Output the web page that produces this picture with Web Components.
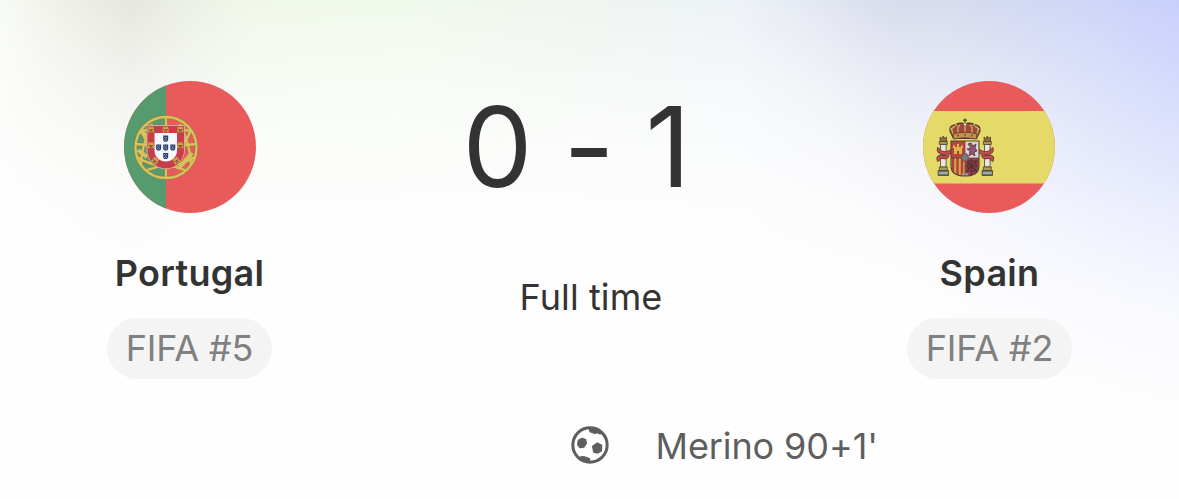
<!DOCTYPE html>
<html lang="en">
<head>
<meta charset="utf-8">
<title>Portugal - Spain</title>
<style>
    body {
        margin: 0;
        background: #fefefe;
        font-family: Inter, "Liberation Sans", sans-serif;
        color: #333;
    }
</style>
</head>
<body>
<match-card>
    <team-badge slot="home" rank="FIFA #5"><flag-portugal slot="flag"></flag-portugal>Portugal</team-badge>
    <match-score slot="score" home="0" away="1">Full time</match-score>
    <team-badge slot="away" rank="FIFA #2"><flag-spain slot="flag"></flag-spain>Spain</team-badge>
    <goal-row slot="goals">Merino 90+1'</goal-row>
</match-card>

<script>
function define(name, html, setup) {
    const template = document.createElement("template");
    template.innerHTML = html;

    customElements.define(name, class extends HTMLElement {
        constructor() {
            super();
            const shadow = this.attachShadow({mode: "open"});
            shadow.append(template.content.cloneNode(true));
        }

        connectedCallback() {
            if (setup) setup(this, this.shadowRoot);
        }
    });
}

define("match-card", `
    <style>
        :host {
            display: flex;
            flex-direction: column;
            box-sizing: border-box;
            height: 499px;
            padding-top: 81px;
            overflow: hidden;
            background:
                radial-gradient(ellipse 420px 370px at 1240px 60px, rgba(196, 204, 252, 0.6), rgba(206, 213, 252, 0.42) 35%, rgba(224, 229, 253, 0.2) 68%, rgba(255, 255, 255, 0) 100%),
                linear-gradient(to bottom, rgba(254, 254, 254, 0), rgba(254, 254, 254, 0.25) 40px, rgba(254, 254, 254, 0.52) 85px, rgba(254, 254, 254, 0.75) 140px, rgba(254, 254, 254, 0.92) 210px, #fefefe 300px),
                linear-gradient(to right, #f8fbf5, #eff1e9 60px, #e6e7df 130px, #ebefe5 180px, #f0f8ea 250px, #f1f9ec 400px, #eff5ef 580px, #edf2f7 740px, #e3e7f1 820px, #d6daea 900px, #d3d8eb 970px, #d0d7f2 1070px, #c8cefa 1179px);
        }

        .teams {
            display: grid;
            grid-template-columns: 379px 1fr 379px;
            align-items: start;
        }

        .goals {
            margin-top: 45px;
        }
    </style>
    <div class="teams">
        <slot name="home"></slot>
        <slot name="score"></slot>
        <slot name="away"></slot>
    </div>
    <div class="goals"><slot name="goals"></slot></div>
`);

define("team-badge", `
    <style>
        :host {
            display: flex;
            flex-direction: column;
            align-items: center;
        }

        .name {
            margin-top: 38px;
            font-size: 36px;
            line-height: 44px;
            font-weight: 600;
            letter-spacing: 0.3px;
        }

        .rank {
            box-sizing: border-box;
            width: 165px;
            height: 61px;
            margin-top: 23px;
            border-radius: 31px;
            background: #f4f4f4;
            color: #808080;
            font-size: 36px;
            line-height: 61px;
            letter-spacing: -0.15px;
            text-align: center;
            white-space: nowrap;
        }
    </style>
    <slot name="flag"></slot>
    <div class="name"><slot></slot></div>
    <div class="rank"></div>
`, (el, shadow) => {
    shadow.querySelector(".rank").textContent = el.getAttribute("rank");
});

define("match-score", `
    <style>
        :host {
            display: flex;
            flex-direction: column;
            align-items: center;
        }

        .score {
            display: flex;
            gap: 31px;
            padding-right: 26px;
            font-size: 111px;
            line-height: 132px;
        }

        .status {
            margin-top: 62px;
            padding-left: 3px;
            font-size: 36px;
            line-height: 44px;
            letter-spacing: 0.1px;
        }
    </style>
    <div class="score"><span class="home"></span><span>-</span><span class="away"></span></div>
    <div class="status"><slot></slot></div>
`, (el, shadow) => {
    shadow.querySelector(".home").textContent = el.getAttribute("home");
    shadow.querySelector(".away").textContent = el.getAttribute("away");
});

define("goal-row", `
    <style>
        :host {
            display: grid;
            grid-template-columns: 1fr 38px 1fr;
            column-gap: 47px;
            align-items: center;
            color: #5e5e5e;
            font-size: 36px;
            line-height: 44px;
            letter-spacing: -0.1px;
        }

        svg {
            display: block;
            grid-column: 2;
            margin-bottom: 2px;
        }
    </style>
    <svg width="38" height="38" viewBox="18 17 114 114">
        <circle cx="75" cy="74" r="51.5" fill="none" stroke="currentColor" stroke-width="9"/>
        <g fill="currentColor" stroke="currentColor" stroke-width="4" stroke-linejoin="round">
            <path d="M51 54 62 58 64 69 57 80 45 82 38 73 40 60Z"/>
            <path d="M97 68 110 75 109 92 98 98 86 95 83 78Z"/>
            <path d="M72 23 75 34 89 39 98 37 105 41 113 37 98 25Z"/>
            <path d="M42 113 50 109 60 110 73 115 75 125 60 124Z"/>
        </g>
    </svg>
    <span><slot></slot></span>
`);

define("flag-portugal", `
    <style>
        :host {
            display: block;
            width: 132px;
            height: 132px;
            border-radius: 50%;
            overflow: hidden;
        }

        svg { display: block; }
    </style>
    <svg width="132" height="132" viewBox="0 0 132 132">
        <defs>
            <g id="castle">
                <path d="M-3 3V-1H-2.5V-3H-1.2V-2H-.6V-3H.6V-2H1.2V-3H2.5V-1H3V3Z" fill="#d0a84c"/>
                <path d="M-2.4 .2H2.4M-1 3V1.4H1V3" stroke="#7c4a30" stroke-width=".9" fill="none"/>
            </g>
            <g id="quina">
                <path d="M-2.5 -3.1H2.5V.2Q2.5 3.1 0 3.1Q-2.5 3.1 -2.5 .2Z" fill="#263d6b"/>
                <g fill="#cdd5e2"><circle cx="-1" cy="-1.4" r=".5"/><circle cx="1" cy="-1.4" r=".5"/><circle r=".5"/><circle cx="-.8" cy="1.3" r=".5"/><circle cx=".8" cy="1.3" r=".5"/></g>
            </g>
        </defs>
        <rect width="132" height="132" fill="#e95b5a"/>
        <rect width="42" height="132" fill="#569b6e"/>
        <g fill="none">
            <g stroke="#8c7c40" stroke-width="3.3">
                <circle cx="42" cy="66.5" r="30.5"/>
                <path d="M42 36V97M12 63Q42 67 72 63M13 76Q42 94 71 76M17 50Q42 45 67 50M18 51Q30 82 61 89M66 51Q54 82 23 89M17 84Q17 66 28 43M67 84Q67 66 56 43"/>
            </g>
            <g stroke="#d8c25a" stroke-width="2.3">
                <circle cx="42" cy="66.5" r="30.5"/>
                <path d="M42 36V97M12 63Q42 67 72 63M13 76Q42 94 71 76M17 50Q42 45 67 50M18 51Q30 82 61 89M66 51Q54 82 23 89M17 84Q17 66 28 43M67 84Q67 66 56 43"/>
            </g>
            <path d="M17 50 25 58M68 72 55 87M14 69 23 76" stroke="#d8c25a" stroke-width="4"/>
        </g>
        <path d="M23 44.5H60.5V69A18.75 18.8 0 0 1 23 69Z" fill="#c83d4a" stroke="#d9a5a0" stroke-width="1"/>
        <path d="M30.5 52H53V69.5A11.25 11 0 0 1 30.5 69.5Z" fill="#f8f8fa"/>
        <use href="#castle" x="27" y="48.5"/><use href="#castle" x="41.7" y="48.5"/><use href="#castle" x="56.3" y="48.5"/>
        <use href="#castle" x="27" y="64.3"/><use href="#castle" x="56.3" y="64.3"/>
        <use href="#castle" transform="translate(31.2 79.5) rotate(35)"/><use href="#castle" transform="translate(52.3 79.5) rotate(-35)"/>
        <use href="#quina" x="41.7" y="57.7"/><use href="#quina" x="34.6" y="66.5"/><use href="#quina" x="41.7" y="66.5"/>
        <use href="#quina" x="48.8" y="66.5"/><use href="#quina" x="41.7" y="75"/>
    </svg>
`);

define("flag-spain", `
    <style>
        :host {
            display: block;
            width: 132px;
            height: 132px;
            margin-right: 1px;
            border-radius: 50%;
            overflow: hidden;
        }

        svg { display: block; }
    </style>
    <svg width="132" height="132" viewBox="0 0 132 132">
        <defs>
            <clipPath id="shield"><path d="M28 60H56V85Q56 95 42 95Q28 95 28 85Z"/></clipPath>
            <g id="pillar" stroke="#4a4038" stroke-width=".8">
                <path d="M-3.2 -15.5V-20L-1.5 -18.5 0 -21 1.5 -18.5 3.2 -20V-15.5Z" fill="#8f6f38"/>
                <path d="M-4 -15.5H4V-12.5H-4Z" fill="#b39648"/>
                <path d="M-2.8 -12.5H2.8V10H-2.8Z" fill="#e9e6e0"/>
                <path d="M-4 10H4V13.5H-4Z" fill="#b39c50"/>
                <path d="M-5.2 13.5H5.2V18.5H-5.2Z" fill="#65776f"/>
                <path d="M-4.5 16H4.5" stroke="#d8dcd8" stroke-width="1.2"/>
            </g>
            <path id="ribbon" d="M-4 -5Q-6 -1 0 0Q6 1 11 -4M-4 8Q-7 3 0 4Q5 5 4 0" fill="none"/>
        </defs>
        <rect width="132" height="132" fill="#e95b5a"/>
        <rect y="30" width="132" height="72.5" fill="#e5da67"/>

        <use href="#pillar" x="20.3" y="76"/>
        <use href="#pillar" x="64.3" y="76"/>
        <g stroke="#6e3430" stroke-width="4"><use href="#ribbon" x="20.3" y="72"/><use href="#ribbon" transform="translate(64.3 72) scale(-1 1)"/></g>
        <g stroke="#b9504c" stroke-width="2.5"><use href="#ribbon" x="20.3" y="72"/><use href="#ribbon" transform="translate(64.3 72) scale(-1 1)"/></g>

        <!-- quartered arms -->
        <g clip-path="url(#shield)">
            <rect x="28" y="60" width="14" height="17" fill="#b9443f"/>
            <rect x="42" y="60" width="14" height="17" fill="#ddd5d8"/>
            <rect x="28" y="77" width="14" height="19" fill="#d5a64a"/>
            <path d="M30 77V96M34.5 77V96M39 77V96" stroke="#b0403a" stroke-width="2.4"/>
            <rect x="42" y="77" width="14" height="19" fill="#95404a"/>
            <path d="M31 73V67H30V64.5H32V66H34V63H36V66H38V64.5H40V67H39V73Z" fill="#e0b34b"/>
            <path d="M34 73V70H36V73" fill="#8e4936"/>
            <path d="M45 63 48 62 50 65 53 63 52 67 54 70 51 71 52 75 49 73 46 75 47 70 44 68 48 67Z" fill="#8f5570" stroke="#5b3b48" stroke-width=".9"/>
            <path d="M43 79 54 91M54 79 43 91M48.5 78V94M43 85H55M45 80H53V90H45Z" stroke="#5a2f36" fill="none" stroke-width="1.2"/>
            <path d="M37 96Q42 87 47 96Z" fill="#b6a3a5"/>
            <path d="M42 60V95M28 77H56" stroke="#593f3a" stroke-width=".7"/>
        </g>
        <path d="M28 60H56V85Q56 95 42 95Q28 95 28 85Z" fill="none" stroke="#5a4038" stroke-width="1.1"/>
        <ellipse cx="42" cy="76.5" rx="3.4" ry="4" fill="#6f7f80" stroke="#8a4644" stroke-width="1"/>

        <!-- crown -->
        <path d="M30.5 57.5 27 50Q26 44 33 43.5Q37 41 42 43Q47 41 51 43.5Q58 44 57 50L53.5 57.5Z" fill="#a04840" stroke="#4f3b2c" stroke-width="1.2"/>
        <path d="M31 54Q26 47 32 45.5M36 54Q33 46 37 44M42 54V43M48 54Q51 46 47 44M53 54Q58 47 52 45.5" fill="none" stroke="#cfa64a" stroke-width="1.5"/>
        <path d="M30 53Q42 49.5 54 53L53.5 58Q42 55.5 30.5 58Z" fill="#c0954a" stroke="#5c4430" stroke-width=".9"/>
        <path d="M34 54.6H36M41 53.8H43M48 54.6H50" stroke="#a13f48" stroke-width="1.6"/>
        <path d="M42 37.5V43M40 39.3H44" stroke="#5b5140" stroke-width="1.4"/>
        <g fill="#f0e3b8" stroke="#7c6440" stroke-width=".4"><circle cx="28.5" cy="48" r="1"/><circle cx="33" cy="44" r="1"/><circle cx="51" cy="44" r="1"/><circle cx="55.5" cy="48" r="1"/><circle cx="42" cy="43.3" r="1.4"/></g>
    </svg>
`);
</script>
</body>
</html>
